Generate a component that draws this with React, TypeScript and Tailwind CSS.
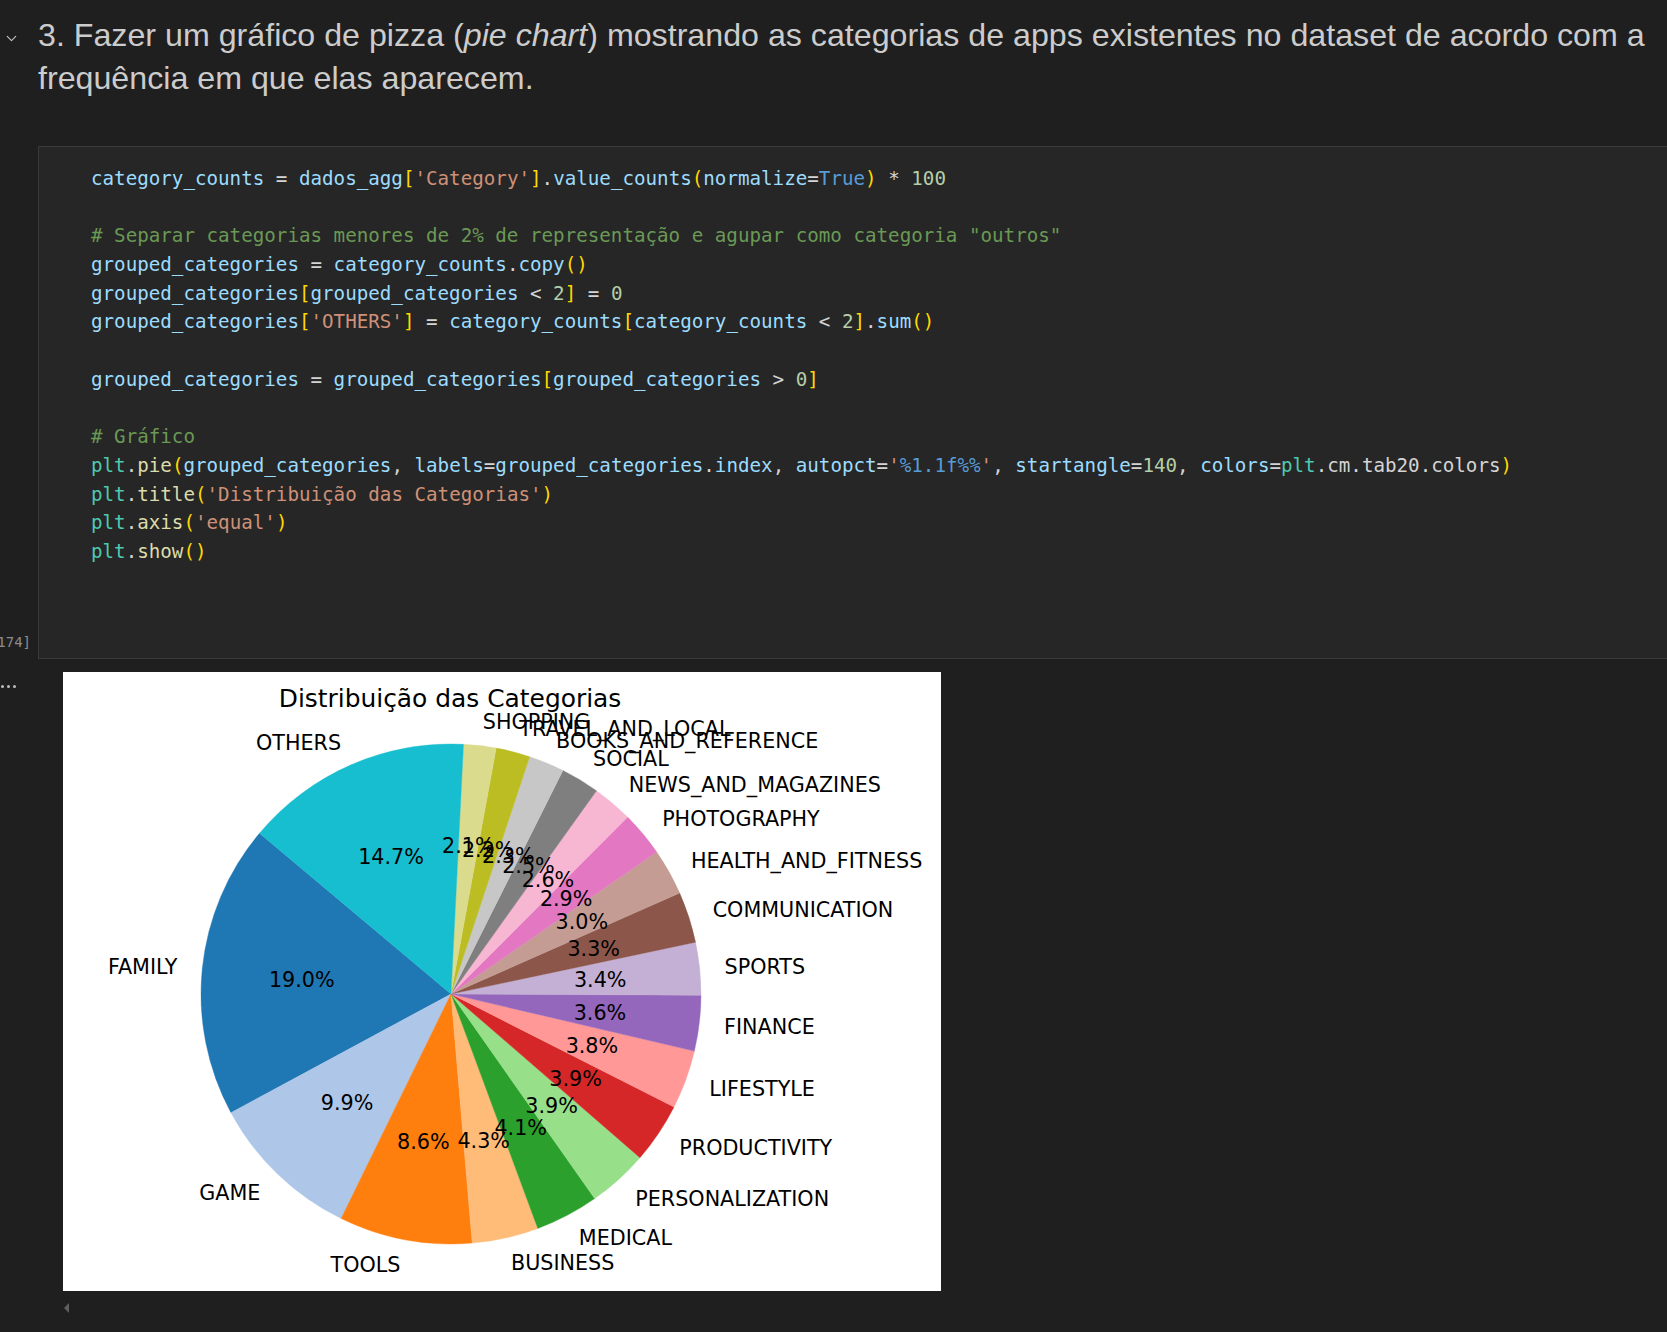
import React from "react";
import { ChevronDown } from "lucide-react";

const COL: Record<string, string> = {
  v: "text-[#9cdcfe]",
  o: "text-[#d4d4d4]",
  s: "text-[#ce9178]",
  b: "text-[#ffd700]",
  f: "text-[#dcdcaa]",
  n: "text-[#b5cea8]",
  k: "text-[#569cd6]",
  c: "text-[#6a9955]",
  m: "text-[#4ec9b0]",
};

type Tok = [string, string];

const lines: Tok[][] = [
  [["v", "category_counts"], ["o", " = "], ["v", "dados_agg"], ["b", "["], ["s", "'Category'"], ["b", "]"], ["o", "."], ["v", "value_counts"], ["b", "("], ["v", "normalize"], ["o", "="], ["k", "True"], ["b", ")"], ["o", " * "], ["n", "100"]],
  [],
  [["c", "# Separar categorias menores de 2% de representação e agupar como categoria \"outros\""]],
  [["v", "grouped_categories"], ["o", " = "], ["v", "category_counts"], ["o", "."], ["v", "copy"], ["b", "()"]],
  [["v", "grouped_categories"], ["b", "["], ["v", "grouped_categories"], ["o", " < "], ["n", "2"], ["b", "]"], ["o", " = "], ["n", "0"]],
  [["v", "grouped_categories"], ["b", "["], ["s", "'OTHERS'"], ["b", "]"], ["o", " = "], ["v", "category_counts"], ["b", "["], ["v", "category_counts"], ["o", " < "], ["n", "2"], ["b", "]"], ["o", "."], ["v", "sum"], ["b", "()"]],
  [],
  [["v", "grouped_categories"], ["o", " = "], ["v", "grouped_categories"], ["b", "["], ["v", "grouped_categories"], ["o", " > "], ["n", "0"], ["b", "]"]],
  [],
  [["c", "# Gráfico"]],
  [["m", "plt"], ["o", "."], ["f", "pie"], ["b", "("], ["v", "grouped_categories"], ["o", ", "], ["v", "labels"], ["o", "="], ["v", "grouped_categories"], ["o", "."], ["v", "index"], ["o", ", "], ["v", "autopct"], ["o", "="], ["s", "'"], ["k", "%1.1f%%"], ["s", "'"], ["o", ", "], ["v", "startangle"], ["o", "="], ["n", "140"], ["o", ", "], ["v", "colors"], ["o", "="], ["m", "plt"], ["o", ".cm.tab20.colors"], ["b", ")"]],
  [["m", "plt"], ["o", "."], ["f", "title"], ["b", "("], ["s", "'Distribuição das Categorias'"], ["b", ")"]],
  [["m", "plt"], ["o", "."], ["f", "axis"], ["b", "("], ["s", "'equal'"], ["b", ")"]],
  [["m", "plt"], ["o", "."], ["f", "show"], ["b", "()"]],
];

const data: [string, number][] = [
  ["FAMILY", 19.0],
  ["GAME", 9.9],
  ["TOOLS", 8.6],
  ["BUSINESS", 4.3],
  ["MEDICAL", 4.1],
  ["PERSONALIZATION", 3.9],
  ["PRODUCTIVITY", 3.9],
  ["LIFESTYLE", 3.8],
  ["FINANCE", 3.6],
  ["SPORTS", 3.4],
  ["COMMUNICATION", 3.3],
  ["HEALTH_AND_FITNESS", 3.0],
  ["PHOTOGRAPHY", 2.9],
  ["NEWS_AND_MAGAZINES", 2.6],
  ["SOCIAL", 2.5],
  ["BOOKS_AND_REFERENCE", 2.3],
  ["TRAVEL_AND_LOCAL", 2.2],
  ["SHOPPING", 2.1],
  ["OTHERS", 14.7],
];

const tab20 = [
  "#1f77b4", "#aec7e8", "#ff7f0e", "#ffbb78", "#2ca02c", "#98df8a", "#d62728", "#ff9896", "#9467bd", "#c5b0d5",
  "#8c564b", "#c49c94", "#e377c2", "#f7b6d2", "#7f7f7f", "#c7c7c7", "#bcbd22", "#dbdb8d", "#17becf", "#9edae5",
];

function PieChart() {
  const cx = 388;
  const cy = 322;
  const r = 250;
  const FS = 20.7;
  const dy = 0.262 * FS + 2.5;
  const total = data.reduce((a, d) => a + d[1], 0);
  const rad = (d: number) => (d * Math.PI) / 180;
  let t = 140;
  const wedges: React.ReactNode[] = [];
  const texts: React.ReactNode[] = [];
  data.forEach(([name, v], i) => {
    const sweep = (v / total) * 360;
    const t1 = t;
    const t2 = t + sweep;
    t = t2;
    const x1 = cx + r * Math.cos(rad(t1));
    const y1 = cy - r * Math.sin(rad(t1));
    const x2 = cx + r * Math.cos(rad(t2));
    const y2 = cy - r * Math.sin(rad(t2));
    const large = sweep > 180 ? 1 : 0;
    wedges.push(
      <path
        key={"w" + i}
        d={`M${cx},${cy} L${x1},${y1} A${r},${r} 0 ${large} 0 ${x2},${y2} Z`}
        fill={tab20[i]}
        stroke={tab20[i]}
        strokeWidth={0.4}
      />
    );
    const tm = rad((t1 + t2) / 2);
    const lx = cx + 1.1 * r * Math.cos(tm);
    const ly = cy - 1.1 * r * Math.sin(tm);
    texts.push(
      <text key={"l" + i} x={lx} y={ly + dy} textAnchor={Math.cos(tm) > 0 ? "start" : "end"}>
        {name}
      </text>
    );
    const px = cx + 0.6 * r * Math.cos(tm);
    const py = cy - 0.6 * r * Math.sin(tm);
    texts.push(
      <text key={"p" + i} x={px} y={py + dy} textAnchor="middle">
        {v.toFixed(1)}%
      </text>
    );
  });
  return (
    <svg width={878} height={619} viewBox="0 0 878 619" className="block">
      <rect x={0} y={0} width={878} height={619} fill="#ffffff" />
      <text x={387} y={34.5} textAnchor="middle" fontFamily="'DejaVu Sans', sans-serif" fontSize={24.9} fill="#000">
        Distribuição das Categorias
      </text>
      {wedges}
      <g fontFamily="'DejaVu Sans', sans-serif" fontSize={FS} fill="#000">
        {texts}
      </g>
    </svg>
  );
}

export default function App() {
  return (
    <div className="w-[1667px] h-[1332px] overflow-hidden bg-[#1f1f1f] flex flex-col">
      {/* Markdown cell */}
      <div className="flex pt-[14px]">
        <div className="w-[38px] shrink-0 flex justify-start pl-[3px] pt-[16px]">
          <ChevronDown size={17} strokeWidth={1.6} className="text-[#c5c5c5]" />
        </div>
        <div className="w-[1622px] font-['Liberation_Sans',sans-serif] text-[32.2px] leading-[42.5px] text-[#cccccc]">
          3. Fazer um gráfico de pizza (<em>pie chart</em>) mostrando as categorias de apps existentes no dataset de acordo com a frequência em que elas aparecem.
        </div>
      </div>

      {/* Code cell */}
      <div className="flex mt-[47px]">
        <div className="w-[38px] shrink-0 flex items-end justify-end pr-[7px] pb-[6px] overflow-visible">
          <span className="whitespace-nowrap font-['DejaVu_Sans_Mono',monospace] text-[14px] text-[#8c8c8c]">[174]</span>
        </div>
        <div className="w-[1640px] shrink-0 h-[513px] border border-r-0 border-[#3a3a3a] bg-[#262626] pl-[52px] pt-[18px]">
          <pre className="font-['DejaVu_Sans_Mono',monospace] text-[19.2px] leading-[28.7px] m-0">
            {lines.map((ln, i) => (
              <div key={i} className="h-[28.7px] whitespace-pre">
                {ln.map((tk, j) => (
                  <span key={j} className={COL[tk[0]]}>
                    {tk[1]}
                  </span>
                ))}
              </div>
            ))}
          </pre>
        </div>
      </div>

      {/* Output */}
      <div className="flex mt-[13px]">
        <div className="w-[63px] shrink-0 pt-[13px] pl-[1px]">
          <div className="flex gap-[3px]">
            <div className="w-[3px] h-[3px] rounded-full bg-[#bdbdbd]" />
            <div className="w-[3px] h-[3px] rounded-full bg-[#bdbdbd]" />
            <div className="w-[3px] h-[3px] rounded-full bg-[#bdbdbd]" />
          </div>
        </div>
        <div className="flex flex-col">
          <PieChart />
          <div className="pt-[11px] pl-0">
            <svg width={8} height={12} viewBox="0 0 8 12">
              <path d="M6 1 L1 6 L6 11 Z" fill="#5f5f5f" />
            </svg>
          </div>
        </div>
      </div>
    </div>
  );
}
